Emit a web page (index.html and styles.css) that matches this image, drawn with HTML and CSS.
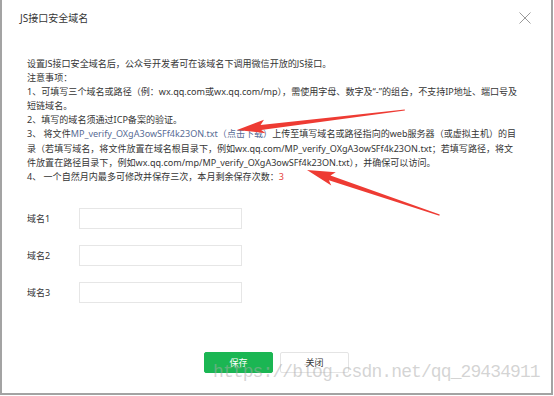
FILE: index.html
```html
<!DOCTYPE html>
<html>
  <head>
    <meta charset="utf-8" />
    <title>JS接口安全域名</title>
    <link rel="stylesheet" href="styles.css">
  </head>

  <body>
    <div class="dialog">
      <div class="dialog-header">
        <h3 class="dialog-title">JS接口安全域名</h3>
        <span class="close-icon">
          <svg width="12" height="12" viewBox="0 0 12 12">
            <path d="M0.5 0.5 L11.5 11.5 M11.5 0.5 L0.5 11.5" stroke="#9a9a9a" stroke-width="1" fill="none" />
          </svg>
        </span>
      </div>

      <div class="notes">
        <p>设置JS接口安全域名后，公众号开发者可在该域名下调用微信开放的JS接口。</p>
        <p>注意事项：</p>
        <p>1、可填写三个域名或路径（例：wx.qq.com或wx.qq.com/mp），需使用字母、数字及“-”的组合，不支持IP地址、端口号及<br>短链域名。</p>
        <p>2、填写的域名须通过ICP备案的验证。</p>
        <p>3、 将文件<a class="link" href="#">MP_verify_OXgA3owSFf4k23ON.txt（点击下载）</a>上传至填写域名或路径指向的web服务器（或虚拟主机）的目<br>录（若填写域名，将文件放置在域名根目录下，例如wx.qq.com/MP_verify_OXgA3owSFf4k23ON.txt；若填写路径，将文<br>件放置在路径目录下，例如wx.qq.com/mp/MP_verify_OXgA3owSFf4k23ON.txt），并确保可以访问。</p>
        <p>4、 一个自然月内最多可修改并保存三次，本月剩余保存次数：<span class="count">3</span></p>
      </div>

      <form class="domain-form">
        <div class="form-row">
          <label>域名1</label>
          <input type="text" name="domain1" />
        </div>
        <div class="form-row">
          <label>域名2</label>
          <input type="text" name="domain2" />
        </div>
        <div class="form-row">
          <label>域名3</label>
          <input type="text" name="domain3" />
        </div>
      </form>

      <div class="dialog-footer">
        <button type="button" class="btn btn-primary">保存</button>
        <button type="button" class="btn btn-default">关闭</button>
      </div>

      <svg class="marks" width="553" height="395" viewBox="0 0 553 395">
        <g transform="translate(237 130) rotate(-6.8)" fill="#ee3b33">
          <polygon points="0,0 28,-7 24,-2.2 169,-0.4 169,0.6 24,2.8 28,6.5" />
        </g>
        <g transform="translate(307 170) rotate(18.7)" fill="#ee3b33">
          <polygon points="0,0 28,-7 24,-2.2 140,-0.4 140,0.8 24,2.8 28,7" />
        </g>
      </svg>

      <div class="watermark">https://blog.csdn.net/qq_29434911</div>
    </div>
  </body>
</html>
```

FILE: styles.css
```css
body {
  margin: 0;
  background: #ffffff;
  font-family: "Noto Sans", "Noto Sans CJK SC", sans-serif;
  color: #353535;
}

.dialog {
  position: relative;
  width: 553px;
  height: 395px;
  border: 2px solid #a3a3a3;
  border-top: none;
  box-sizing: border-box;
  background: white;
  overflow: hidden;
}

.dialog-header {
  display: flex;
  justify-content: space-between;
  align-items: center;
  height: 36px;
  padding: 0 20px 0 18px;
}

.dialog-title {
  margin: 0;
  font-size: 10px;
  font-weight: normal;
  line-height: 12px;
}

.close-icon {
  display: flex;
  width: 12px;
  height: 12px;
}

.notes {
  padding: 21px 0 0 25px;
  font-size: 9.05px;
  line-height: 14.1px;
}

.notes p {
  margin: 0;
  white-space: nowrap;
}

.link {
  color: #576b95;
  text-decoration: none;
}

.count {
  color: #e64340;
}

.domain-form {
  margin: 24px 0 0 25px;
  display: flex;
  flex-direction: column;
  gap: 16px;
}

.form-row {
  display: flex;
  align-items: center;
}

.form-row label {
  width: 52px;
  font-size: 9px;
}

.form-row input {
  width: 163px;
  height: 21px;
  padding: 0 6px;
  border: 1px solid #e6e6e6;
  border-radius: 0;
  box-sizing: border-box;
  outline: none;
}

.dialog-footer {
  display: flex;
  gap: 7px;
  margin: 49px 0 0 202px;
}

.btn {
  width: 69px;
  height: 21px;
  padding: 0;
  border-radius: 2px;
  font-family: "Noto Sans CJK SC", sans-serif;
  font-size: 9px;
  cursor: pointer;
}

.btn-primary {
  background-color: #1bb653;
  border: 1px solid #1bb653;
  color: white;
}

.btn-default {
  background-color: white;
  border: 1px solid #e4e4e4;
  color: #353535;
}

.marks {
  position: absolute;
  left: -2px;
  top: 0;
  pointer-events: none;
}

.watermark {
  position: absolute;
  left: 211px;
  top: 362px;
  font-family: "Liberation Mono", monospace;
  font-size: 18px;
  letter-spacing: -0.9px;
  color: rgba(170, 170, 170, 0.5);
  pointer-events: none;
}
```
